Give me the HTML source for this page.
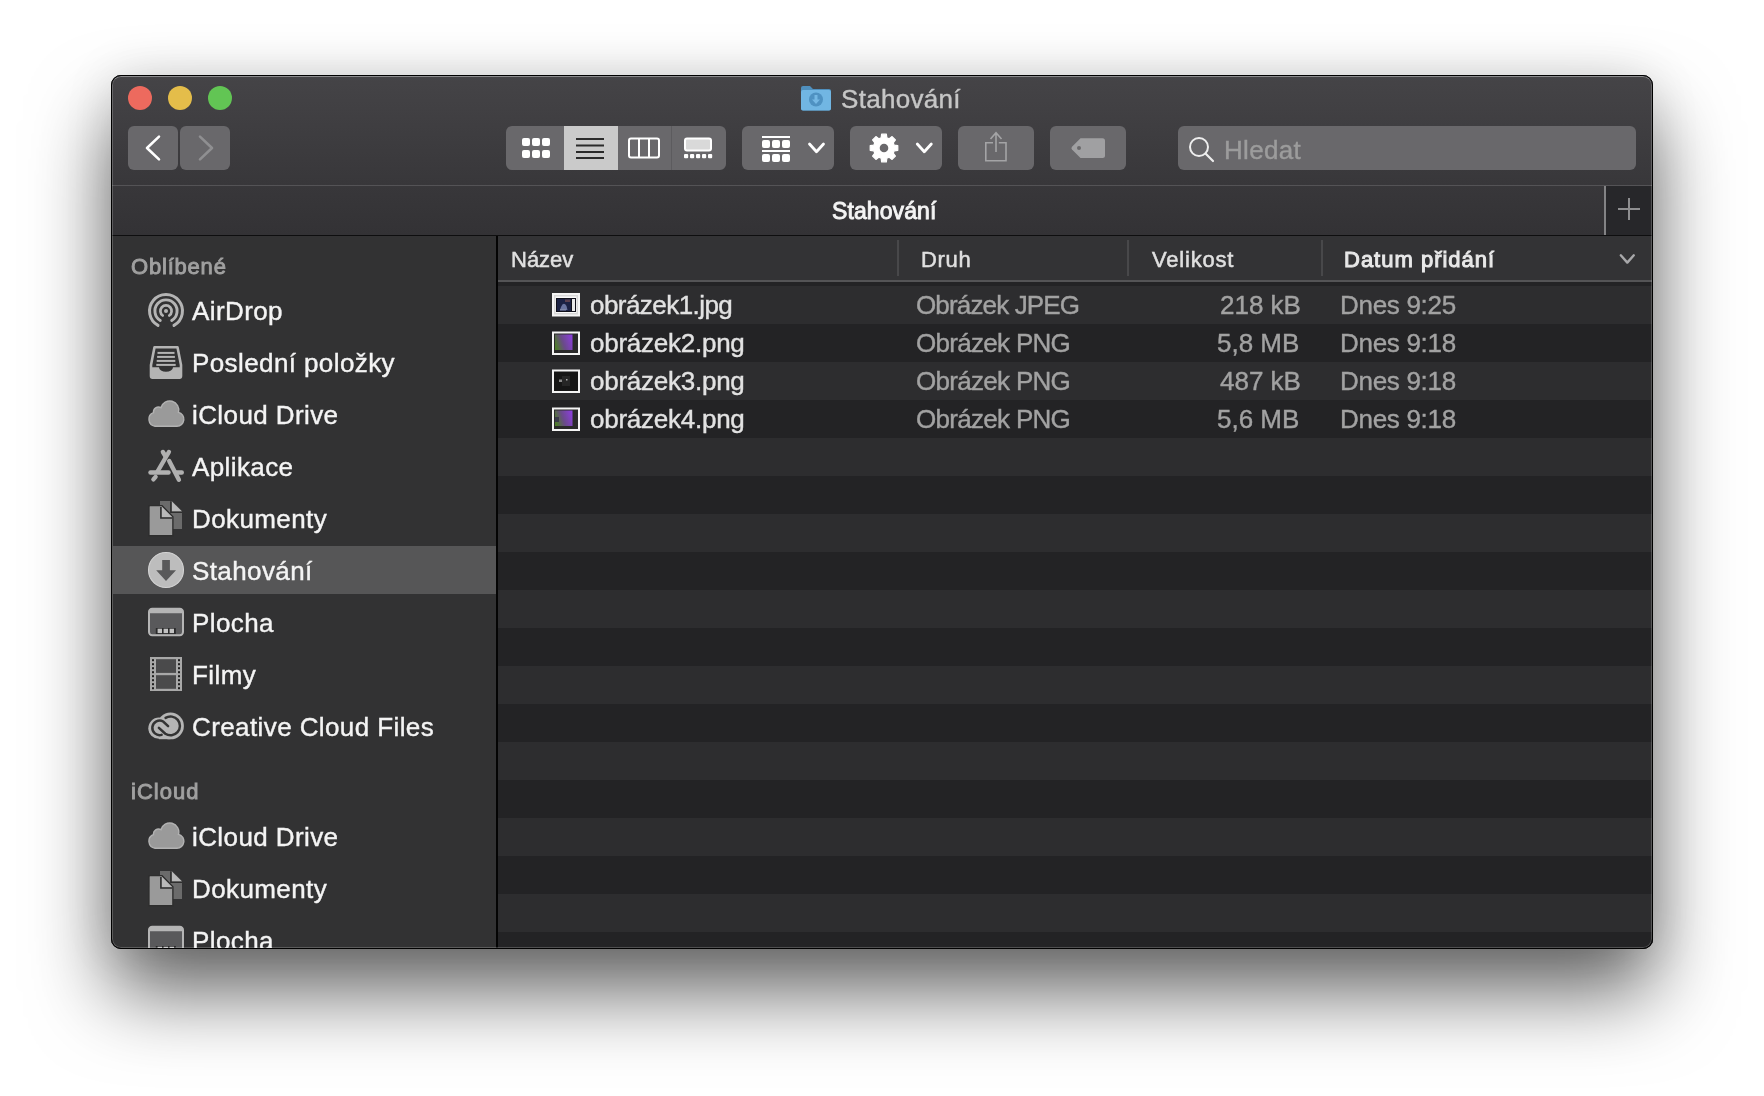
<!DOCTYPE html>
<html><head><meta charset="utf-8"><style>
html,body{margin:0;padding:0;width:1764px;height:1096px;overflow:hidden;background:#fff;font-family:"Liberation Sans",sans-serif;}
.a{position:absolute;}
#win{position:absolute;left:111px;top:75px;width:1542px;height:874px;border-radius:10px;background:#323233;overflow:hidden;
 box-shadow:0 44px 80px rgba(0,0,0,0.6),0 0 50px rgba(0,0,0,0.1);}
#L{position:absolute;left:-111px;top:-75px;width:1764px;height:1096px;}
#frame{position:absolute;left:111px;top:75px;width:1540px;height:872px;border:1px solid #000;border-radius:10px;pointer-events:none;}
#hl{position:absolute;left:112px;top:76px;width:1538px;height:870px;border:1px solid rgba(255,255,255,0.2);border-top-color:rgba(255,255,255,0.38);border-radius:9px;pointer-events:none;}
.t{position:absolute;white-space:nowrap;line-height:1;-webkit-text-stroke:0.4px currentColor;-webkit-font-smoothing:antialiased;will-change:transform;}
.btn{position:absolute;background:#69686b;border-radius:6px;}
.si{color:#f4f4f4;font-size:26px;left:192px;letter-spacing:0.4px;}
.sh{color:#a0a0a0;font-size:22px;left:131px;-webkit-text-stroke:0.9px currentColor;letter-spacing:0.3px;}
.fn{color:#e2e2e2;font-size:26px;left:590px;}
.fk{color:#a2a2a2;font-size:26px;left:916px;}
.fs{color:#a2a2a2;font-size:26px;right:463px;}
.fd{color:#a2a2a2;font-size:26px;left:1340px;letter-spacing:-0.3px;}
.hd{color:#e0e0e0;font-size:22px;-webkit-text-stroke:0.5px currentColor;}
</style></head>
<body>
<div id="win"><div id="L">
<div class="a" style="left:111px;top:75px;width:1542px;height:110px;background:linear-gradient(#454447,#38373a);"></div>
<div class="a" style="left:111px;top:185px;width:1542px;height:1px;background:#545356;"></div>
<div class="a" style="left:111px;top:186px;width:1542px;height:49px;background:linear-gradient(#38373a,#333235);"></div>
<div class="a" style="left:1604px;top:186px;width:49px;height:49px;background:#27272a;"></div>
<div class="a" style="left:1604px;top:186px;width:2px;height:49px;background:#838385;"></div>
<div class="a" style="left:111px;top:235px;width:1542px;height:1px;background:#0e0e0f;"></div>
<div class="a" style="left:111px;top:236px;width:385px;height:713px;background:#323233;"></div>
<div class="a" style="left:496px;top:236px;width:2px;height:713px;background:#040404;"></div>
<div class="a" style="left:498px;top:236px;width:1155px;height:713px;background:#2d2d2f;"></div>
<div class="a" style="left:498px;top:286px;width:1155px;height:38px;background:#2d2d2f;"></div>
<div class="a" style="left:498px;top:324px;width:1155px;height:38px;background:#232325;"></div>
<div class="a" style="left:498px;top:362px;width:1155px;height:38px;background:#2d2d2f;"></div>
<div class="a" style="left:498px;top:400px;width:1155px;height:38px;background:#232325;"></div>
<div class="a" style="left:498px;top:438px;width:1155px;height:38px;background:#2d2d2f;"></div>
<div class="a" style="left:498px;top:476px;width:1155px;height:38px;background:#232325;"></div>
<div class="a" style="left:498px;top:514px;width:1155px;height:38px;background:#2d2d2f;"></div>
<div class="a" style="left:498px;top:552px;width:1155px;height:38px;background:#232325;"></div>
<div class="a" style="left:498px;top:590px;width:1155px;height:38px;background:#2d2d2f;"></div>
<div class="a" style="left:498px;top:628px;width:1155px;height:38px;background:#232325;"></div>
<div class="a" style="left:498px;top:666px;width:1155px;height:38px;background:#2d2d2f;"></div>
<div class="a" style="left:498px;top:704px;width:1155px;height:38px;background:#232325;"></div>
<div class="a" style="left:498px;top:742px;width:1155px;height:38px;background:#2d2d2f;"></div>
<div class="a" style="left:498px;top:780px;width:1155px;height:38px;background:#232325;"></div>
<div class="a" style="left:498px;top:818px;width:1155px;height:38px;background:#2d2d2f;"></div>
<div class="a" style="left:498px;top:856px;width:1155px;height:38px;background:#232325;"></div>
<div class="a" style="left:498px;top:894px;width:1155px;height:38px;background:#2d2d2f;"></div>
<div class="a" style="left:498px;top:932px;width:1155px;height:38px;background:#232325;"></div>
<div class="a" style="left:498px;top:236px;width:1155px;height:44px;background:#333335;"></div>
<div class="a" style="left:498px;top:280px;width:1155px;height:2px;background:#545456;"></div>
<div class="a" style="left:498px;top:282px;width:1155px;height:4px;background:#232325;"></div>
<div class="a" style="left:897px;top:240px;width:2px;height:36px;background:#48484a;"></div>
<div class="a" style="left:1127px;top:240px;width:2px;height:36px;background:#48484a;"></div>
<div class="a" style="left:1321px;top:240px;width:2px;height:36px;background:#48484a;"></div>
<div class="a" style="left:128px;top:86px;width:24px;height:24px;border-radius:50%;background:#ed6a5e;"></div>
<div class="a" style="left:168px;top:86px;width:24px;height:24px;border-radius:50%;background:#e4bd4a;"></div>
<div class="a" style="left:208px;top:86px;width:24px;height:24px;border-radius:50%;background:#62c554;"></div>
<div class="btn" style="left:128px;top:126px;width:50px;height:44px;"></div>
<div class="btn" style="left:180px;top:126px;width:50px;height:44px;"></div>
<div class="btn" style="left:506px;top:126px;width:220px;height:44px;"></div>
<div class="btn" style="left:742px;top:126px;width:92px;height:44px;"></div>
<div class="btn" style="left:850px;top:126px;width:92px;height:44px;"></div>
<div class="btn" style="left:958px;top:126px;width:76px;height:44px;"></div>
<div class="btn" style="left:1050px;top:126px;width:76px;height:44px;"></div>
<div class="btn" style="left:1178px;top:126px;width:458px;height:44px;"></div>
<div class="a" style="left:564px;top:126px;width:54px;height:44px;background:#cacaca;"></div>
<div class="t " style="left:841px;top:86px;font-size:26px;color:#c6c6c6;letter-spacing:0.3px;">Stahování</div>
<div class="t " style="left:1224px;top:137px;font-size:26px;color:#9c9c9c;letter-spacing:0.3px;">Hledat</div>
<div class="t " style="left:832px;top:200px;font-size:23px;color:#f4f4f4;letter-spacing:0.1px;-webkit-text-stroke:0.9px #f4f4f4;">Stahování</div>
<div class="a" style="left:113px;top:546px;width:383px;height:48px;background:#565657;"></div>
<div class="t sh" style="top:256px;letter-spacing:0.8px;">Oblíbené</div>
<div class="t si" style="top:298px;">AirDrop</div>
<div class="t si" style="top:350px;">Poslední položky</div>
<div class="t si" style="top:402px;">iCloud Drive</div>
<div class="t si" style="top:454px;">Aplikace</div>
<div class="t si" style="top:506px;">Dokumenty</div>
<div class="t si" style="top:558px;">Stahování</div>
<div class="t si" style="top:610px;">Plocha</div>
<div class="t si" style="top:662px;">Filmy</div>
<div class="t si" style="top:714px;">Creative Cloud Files</div>
<div class="t sh" style="top:781px;letter-spacing:1px;">iCloud</div>
<div class="t si" style="top:824px;">iCloud Drive</div>
<div class="t si" style="top:876px;">Dokumenty</div>
<div class="t si" style="top:928px;">Plocha</div>
<div class="t hd" style="left:511px;top:249px;letter-spacing:0px;">Název</div>
<div class="t hd" style="left:921px;top:249px;letter-spacing:0.7px;">Druh</div>
<div class="t hd" style="left:1152px;top:249px;letter-spacing:0.8px;">Velikost</div>
<div class="t hd" style="left:1344px;top:249px;letter-spacing:1px;-webkit-text-stroke:1px currentColor;color:#e8e8e8;">Datum přidání</div>
<div class="t fn" style="top:292px;letter-spacing:-0.55px;">obrázek1.jpg</div>
<div class="t fk" style="top:292px;letter-spacing:-0.85px;">Obrázek JPEG</div>
<div class="t fs" style="top:292px;">218 kB</div>
<div class="t fd" style="top:292px;">Dnes 9:25</div>
<div class="t fn" style="top:330px;letter-spacing:-0.25px;">obrázek2.png</div>
<div class="t fk" style="top:330px;letter-spacing:-0.7px;">Obrázek PNG</div>
<div class="t fs" style="top:330px;right:465px;">5,8 MB</div>
<div class="t fd" style="top:330px;">Dnes 9:18</div>
<div class="t fn" style="top:368px;letter-spacing:-0.25px;">obrázek3.png</div>
<div class="t fk" style="top:368px;letter-spacing:-0.7px;">Obrázek PNG</div>
<div class="t fs" style="top:368px;">487 kB</div>
<div class="t fd" style="top:368px;">Dnes 9:18</div>
<div class="t fn" style="top:406px;letter-spacing:-0.25px;">obrázek4.png</div>
<div class="t fk" style="top:406px;letter-spacing:-0.7px;">Obrázek PNG</div>
<div class="t fs" style="top:406px;right:465px;">5,6 MB</div>
<div class="t fd" style="top:406px;">Dnes 9:18</div>
<svg class="a" style="left:0;top:0;" width="1764" height="1096" viewBox="0 0 1764 1096"><path d="M159 136.6 L147 148 L159 159.4" fill="none" stroke="#fff" stroke-width="2.6" stroke-linecap="round" stroke-linejoin="round"/>
<path d="M200 136.6 L212 148 L200 159.4" fill="none" stroke="#8f8f91" stroke-width="2.6" stroke-linecap="round" stroke-linejoin="round"/>
<rect x="671" y="126" width="1" height="44" fill="#5c5b5e"/>
<rect x="522" y="138" width="8" height="8" rx="2" fill="#fff"/>
<rect x="522" y="150" width="8" height="8" rx="2" fill="#fff"/>
<rect x="532" y="138" width="8" height="8" rx="2" fill="#fff"/>
<rect x="532" y="150" width="8" height="8" rx="2" fill="#fff"/>
<rect x="542" y="138" width="8" height="8" rx="2" fill="#fff"/>
<rect x="542" y="150" width="8" height="8" rx="2" fill="#fff"/>
<rect x="576" y="138" width="28" height="2" fill="#2b2b2b"/>
<rect x="576" y="144.5" width="28" height="2" fill="#2b2b2b"/>
<rect x="576" y="151" width="28" height="2" fill="#2b2b2b"/>
<rect x="576" y="157" width="28" height="2" fill="#2b2b2b"/>
<rect x="629" y="138.5" width="30" height="19" rx="2" fill="none" stroke="#fff" stroke-width="2"/>
<rect x="638" y="138" width="2" height="20" fill="#fff"/><rect x="648" y="138" width="2" height="20" fill="#fff"/>
<rect x="685" y="138.5" width="26" height="12" rx="2" fill="#d9d9d9" stroke="#fff" stroke-width="2"/>
<rect x="684" y="154" width="4.2" height="4.2" rx="1" fill="#fff"/>
<rect x="690" y="154" width="4.2" height="4.2" rx="1" fill="#fff"/>
<rect x="696" y="154" width="4.2" height="4.2" rx="1" fill="#fff"/>
<rect x="702" y="154" width="4.2" height="4.2" rx="1" fill="#fff"/>
<rect x="708" y="154" width="4.2" height="4.2" rx="1" fill="#fff"/>
<rect x="762" y="136" width="28" height="2" fill="#fff"/><rect x="762" y="150" width="28" height="2" fill="#fff"/>
<rect x="762" y="140" width="8" height="8" rx="2" fill="#fff"/>
<rect x="762" y="154" width="8" height="8" rx="2" fill="#fff"/>
<rect x="772" y="140" width="8" height="8" rx="2" fill="#fff"/>
<rect x="772" y="154" width="8" height="8" rx="2" fill="#fff"/>
<rect x="782" y="140" width="8" height="8" rx="2" fill="#fff"/>
<rect x="782" y="154" width="8" height="8" rx="2" fill="#fff"/>
<path d="M809.5 144 L816.5 151.8 L823.5 144" fill="none" stroke="#fff" stroke-width="2.8" stroke-linecap="round" stroke-linejoin="round"/>
<polygon points="881.63,134.20 886.37,134.20 886.83,137.78 889.22,138.78 892.08,136.57 895.43,139.92 893.22,142.78 894.22,145.17 897.80,145.63 897.80,150.37 894.22,150.83 893.22,153.22 895.43,156.08 892.08,159.43 889.22,157.22 886.83,158.22 886.37,161.80 881.63,161.80 881.17,158.22 878.78,157.22 875.92,159.43 872.57,156.08 874.78,153.22 873.78,150.83 870.20,150.37 870.20,145.63 873.78,145.17 874.78,142.78 872.57,139.92 875.92,136.57 878.78,138.78 881.17,137.78" fill="#fff" stroke="#fff" stroke-width="1.2" stroke-linejoin="round"/>
<circle cx="884" cy="148" r="4.3" fill="#69686b"/>
<path d="M917.3 144 L924.3 151.8 L931.3 144" fill="none" stroke="#fff" stroke-width="2.8" stroke-linecap="round" stroke-linejoin="round"/>
<path d="M993 142.8 H985.8 V160.8 H1006 V142.8 H998.8" fill="none" stroke="#a4a4a6" stroke-width="1.6"/>
<path d="M996 152 V133 M990.5 139 L996 132.8 L1001.5 139" fill="none" stroke="#a4a4a6" stroke-width="1.6"/>
<path d="M1080.5 138.2 H1102.5 Q1105 138.2 1105 140.7 V155.5 Q1105 158 1102.5 158 H1080.5 L1072 149.5 Q1070.8 148.1 1072 146.7 Z" fill="#a0a0a2"/>
<circle cx="1079" cy="148" r="2" fill="#69686b"/>
<circle cx="1199" cy="147" r="9" fill="none" stroke="#eeeeee" stroke-width="2"/>
<path d="M1205.5 153.5 L1213 161" stroke="#eeeeee" stroke-width="2.2" stroke-linecap="round"/>
<rect x="1618" y="208" width="22" height="2" fill="#8e8e90"/><rect x="1628" y="198" width="2" height="22" fill="#8e8e90"/>
<path d="M1620.8 255.3 L1627.3 262.6 L1633.8 255.3" fill="none" stroke="#a8a8aa" stroke-width="2.4" stroke-linecap="round" stroke-linejoin="round"/>
<path d="M801 88 Q801 86 803 86 H810 L813 89 H829 Q831 89 831 91 V108.5 Q831 110.5 829 110.5 H803 Q801 110.5 801 108.5 Z" fill="#4f8fbd"/>
<path d="M801 92 Q801 90 803 90 H829 Q831 90 831 92 V108.5 Q831 110.5 829 110.5 H803 Q801 110.5 801 108.5 Z" fill="#71b6e3"/>
<circle cx="816" cy="99.5" r="7" fill="#4f92c2"/>
<path d="M814.5 95 H817.5 V99.5 H820 L816 104 L812 99.5 H814.5 Z" fill="#75b8e4"/>
<circle cx="166" cy="311" r="2" fill="#b4b4b4"/>
<path d="M162.71 315.53 A5.6 5.6 0 1 1 169.29 315.53" fill="none" stroke="#b4b4b4" stroke-width="2.7" stroke-linecap="round"/>
<path d="M160.28 320.51 A11.1 11.1 0 1 1 171.72 320.51" fill="none" stroke="#b4b4b4" stroke-width="2.9" stroke-linecap="round"/>
<path d="M158.00 325.43 A16.5 16.5 0 1 1 174.00 325.43" fill="none" stroke="#b4b4b4" stroke-width="3.0" stroke-linecap="round"/>
<path d="M154.5 347.3 H177.5 L181 365 V376 Q181 377.6 179.5 377.6 H152.5 Q151 377.6 151 376 V365 Z" fill="none" stroke="#b4b4b4" stroke-width="2.6" stroke-linejoin="round"/>
<path d="M150.5 367.3 H159 A7 4.4 0 0 0 173 367.3 H181.5 V376 Q181.5 377.8 179.8 377.8 H152.2 Q150.5 377.8 150.5 376 Z" fill="#b4b4b4"/>
<rect x="157.5" y="351.9" width="17.0" height="2" fill="#b4b4b4"/>
<rect x="157.1" y="355.9" width="17.8" height="2" fill="#b4b4b4"/>
<rect x="156.7" y="359.9" width="18.6" height="2" fill="#b4b4b4"/>
<rect x="156.3" y="363.9" width="19.4" height="2" fill="#b4b4b4"/>
<path d="M155 426.2 H177 A7 7 0 0 0 178.5 412.4 A9 9 0 0 0 161 407.7 A5 5 0 0 0 153.5 412.7 A7 7 0 0 0 155 426.2 Z" fill="#9a9a9a" stroke="#b2b2b2" stroke-width="1.4"/>
<path d="M168.9 452 L157.5 471.5" stroke="#b0b0b0" stroke-width="4.4" stroke-linecap="round" fill="none"/>
<path d="M162.9 452 L165.5 456.3" stroke="#b0b0b0" stroke-width="4.4" stroke-linecap="round" fill="none"/>
<path d="M169.2 461 L178.9 479.8" stroke="#b0b0b0" stroke-width="4.4" stroke-linecap="round" fill="none"/>
<path d="M150.5 472.5 H168.5" stroke="#b0b0b0" stroke-width="4.4" stroke-linecap="round" fill="none"/>
<path d="M176.5 472.5 H181.8" stroke="#b0b0b0" stroke-width="4.4" stroke-linecap="round" fill="none"/>
<path d="M153.4 479.4 L155.6 476.9" stroke="#b0b0b0" stroke-width="4.4" stroke-linecap="round" fill="none"/>
<path d="M160 501 H171.7 L182 511.3 V529 H160 Z" fill="#6b6b6b"/><path d="M171.7 501.2 L182 511.5 H171.7 Z" fill="#bababa"/><path d="M170.9 501.2 V512.3 H182" fill="none" stroke="#2e2e2e" stroke-width="1.6"/><path d="M149.8 506.6 H161.7 L172.1 517 V535 H149.8 Z" fill="#9a9a9a" stroke="#2e2e2e" stroke-width="3" paint-order="stroke"/><path d="M149.8 506.6 H161.7 L172.1 517 V535 H149.8 Z" fill="#9a9a9a"/><path d="M161.7 507 L171.9 517.2 H161.7 Z" fill="#bababa"/><path d="M160.9 507 V518 H172.1" fill="none" stroke="#2e2e2e" stroke-width="1.6"/>
<circle cx="166" cy="570" r="17.5" fill="#bdbdbd" stroke="#d4d4d4" stroke-width="1.1"/>
<path d="M162.2 560 H169.9 V570.3 H176 L166 581 L156.2 570.3 H162.2 Z" fill="#59595a"/>
<rect x="149" y="608.8" width="34" height="26.4" rx="3.2" fill="#59595b" stroke="#b5b5b5" stroke-width="2"/><path d="M149 613.3 V611.8 Q149 608.8 152.2 608.8 H179.8 Q183 608.8 183 611.8 V613.3 Z" fill="#b5b5b5"/><rect x="155.8" y="628" width="20" height="6" fill="#2a2a2b"/><rect x="157.6" y="628.7" width="4.4" height="4.4" fill="#c2c2c2"/><rect x="163.6" y="628.7" width="4.4" height="4.4" fill="#c2c2c2"/><rect x="169.6" y="628.7" width="4.4" height="4.4" fill="#c2c2c2"/>
<rect x="150" y="657" width="32" height="34" fill="#a8a8a8"/>
<rect x="156" y="659.2" width="20" height="13.7" fill="#4a4a4b"/><rect x="156" y="675.2" width="20" height="13.6" fill="#4a4a4b"/>
<rect x="152" y="659.2" width="2" height="2" fill="#1e1e1e"/><rect x="178" y="659.2" width="2" height="2" fill="#1e1e1e"/>
<rect x="152" y="663.2" width="2" height="2" fill="#1e1e1e"/><rect x="178" y="663.2" width="2" height="2" fill="#1e1e1e"/>
<rect x="152" y="667.2" width="2" height="2" fill="#1e1e1e"/><rect x="178" y="667.2" width="2" height="2" fill="#1e1e1e"/>
<rect x="152" y="671.2" width="2" height="2" fill="#1e1e1e"/><rect x="178" y="671.2" width="2" height="2" fill="#1e1e1e"/>
<rect x="152" y="675.2" width="2" height="2" fill="#1e1e1e"/><rect x="178" y="675.2" width="2" height="2" fill="#1e1e1e"/>
<rect x="152" y="679.2" width="2" height="2" fill="#1e1e1e"/><rect x="178" y="679.2" width="2" height="2" fill="#1e1e1e"/>
<rect x="152" y="683.2" width="2" height="2" fill="#1e1e1e"/><rect x="178" y="683.2" width="2" height="2" fill="#1e1e1e"/>
<rect x="152" y="687.2" width="2" height="2" fill="#1e1e1e"/><rect x="178" y="687.2" width="2" height="2" fill="#1e1e1e"/>
<g fill="#b5b5b5"><circle cx="158.9" cy="728.2" r="10.6"/><circle cx="170.5" cy="725.9" r="13.4"/><rect x="158.9" y="727" width="11.6" height="12.2"/></g>
<path d="M158.9 727.9 L165.3 733.7 A9.4 9.4 0 1 0 165.6 717.9" fill="none" stroke="#333" stroke-width="2.5" stroke-linecap="round"/>
<path d="M168.1 726.1 L163.2 721.5 A7.3 7.3 0 1 0 161.6 734.9" fill="none" stroke="#333" stroke-width="2.5" stroke-linecap="round"/>
<path d="M155 848.2 H177 A7 7 0 0 0 178.5 834.4000000000001 A9 9 0 0 0 161 829.7 A5 5 0 0 0 153.5 834.7 A7 7 0 0 0 155 848.2 Z" fill="#9a9a9a" stroke="#b2b2b2" stroke-width="1.4"/>
<path d="M160 871 H171.7 L182 881.3 V899 H160 Z" fill="#6b6b6b"/><path d="M171.7 871.2 L182 881.5 H171.7 Z" fill="#bababa"/><path d="M170.9 871.2 V882.3 H182" fill="none" stroke="#2e2e2e" stroke-width="1.6"/><path d="M149.8 876.6 H161.7 L172.1 887 V905 H149.8 Z" fill="#9a9a9a" stroke="#2e2e2e" stroke-width="3" paint-order="stroke"/><path d="M149.8 876.6 H161.7 L172.1 887 V905 H149.8 Z" fill="#9a9a9a"/><path d="M161.7 877 L171.9 887.2 H161.7 Z" fill="#bababa"/><path d="M160.9 877 V888 H172.1" fill="none" stroke="#2e2e2e" stroke-width="1.6"/>
<rect x="149" y="926.8" width="34" height="26.4" rx="3.2" fill="#59595b" stroke="#b5b5b5" stroke-width="2"/><path d="M149 931.3 V929.8 Q149 926.8 152.2 926.8 H179.8 Q183 926.8 183 929.8 V931.3 Z" fill="#b5b5b5"/><rect x="155.8" y="946" width="20" height="6" fill="#2a2a2b"/><rect x="157.6" y="946.7" width="4.4" height="4.4" fill="#c2c2c2"/><rect x="163.6" y="946.7" width="4.4" height="4.4" fill="#c2c2c2"/><rect x="169.6" y="946.7" width="4.4" height="4.4" fill="#c2c2c2"/>
<defs><linearGradient id="gp" x1="0" y1="0.6" x2="1" y2="0.3"><stop offset="0" stop-color="#4e7a2c"/><stop offset="0.45" stop-color="#6a4a8a"/><stop offset="1" stop-color="#8a3fd8"/></linearGradient></defs>
<rect x="552" y="293" width="28" height="23.5" fill="#f4f4f4"/><rect x="554" y="295" width="24" height="19.5" fill="#d8d8d8"/><rect x="555.5" y="296.5" width="21" height="16.5" fill="#fafafa"/><rect x="556" y="298" width="20" height="14" fill="#10101a"/><rect x="557" y="299" width="14" height="12" fill="#1c2244"/><rect x="572" y="299" width="3" height="12" fill="#e8e8e8"/><path d="M561 307 q2.5 -6 5.5 -1 l1 4 h-7.5z" fill="#6a74a0"/><rect x="565" y="299.5" width="5" height="2.5" fill="#5a4050"/><rect x="560" y="309" width="6" height="1.5" fill="#8088a8"/>
<rect x="552" y="331.5" width="28" height="23.5" fill="#f4f4f4"/><rect x="554" y="333.5" width="24" height="19.5" fill="#2a2a2a"/><rect x="555" y="334.5" width="17.5" height="15.5" fill="url(#gp)"/>
<rect x="552" y="369.5" width="28" height="23.5" fill="#f4f4f4"/><rect x="554" y="371.5" width="24" height="19.5" fill="#161616"/><rect x="562" y="376" width="8" height="10" fill="#262626"/><rect x="559" y="379.5" width="3" height="2.5" fill="#8a8a8a"/><rect x="566" y="379" width="1.5" height="1.5" fill="#aaaaaa"/>
<rect x="552" y="407.5" width="28" height="23.5" fill="#f4f4f4"/><rect x="554" y="409.5" width="24" height="19.5" fill="#2a2a2a"/><rect x="555" y="410.5" width="17.5" height="15.5" fill="url(#gp)"/><rect x="555" y="417" width="4" height="5" fill="#3a3a4a"/></svg>
</div></div>
<div id="hl"></div>
<div id="frame"></div>
</body></html>
